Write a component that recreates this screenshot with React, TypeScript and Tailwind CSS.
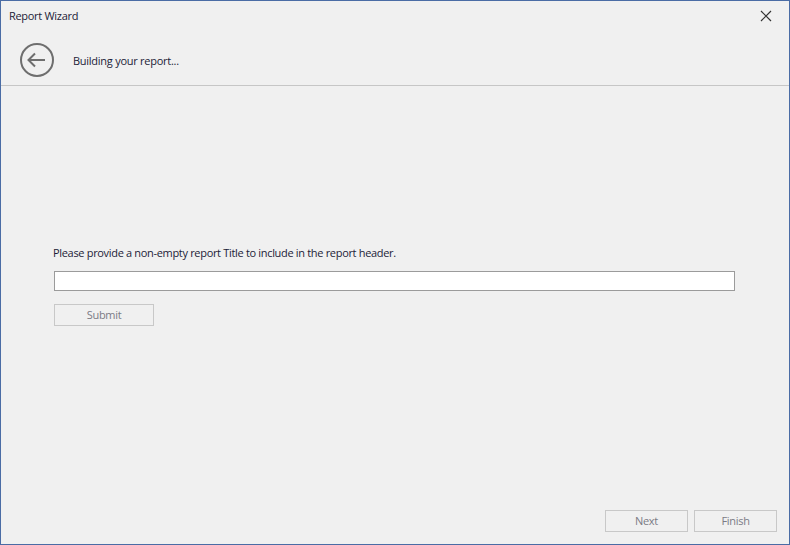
const font = "font-['Open_Sans','Noto_Sans',sans-serif]";

function BackIcon() {
  return (
    <svg width="36" height="36" viewBox="0 0 36 36" fill="none" stroke="#6e6e6e">
      <circle cx="18" cy="18" r="16" strokeWidth="2" />
      <path d="M26 18H9.5M16 11.5L9.5 18L16 24.5" strokeWidth="2" />
    </svg>
  );
}

function CloseIcon() {
  return (
    <svg width="12" height="12" viewBox="0 0 12 12" fill="none" stroke="#333333" strokeWidth="1.2">
      <path d="M1 1L11 11M11 1L1 11" />
    </svg>
  );
}

function DisabledButton({ label, width }: { label: string; width: string }) {
  return (
    <button
      type="button"
      disabled
      className={`h-[22px] ${width} border border-[#c8c8c8] bg-[#f0f0f0] text-[11px] leading-[20px] tracking-[-0.3px] text-[#7b7b85]`}
    >
      {label}
    </button>
  );
}

export default function App() {
  return (
    <div className={`flex h-[545px] w-[790px] flex-col border border-[#4a6ca5] bg-[#f0f0f0] ${font} text-[#1c1c38]`}>
      <div className="flex h-[30px] items-center justify-between pl-2 pr-[17px]">
        <span className="text-[11px] tracking-[-0.3px]">Report Wizard</span>
        <CloseIcon />
      </div>

      <div className="box-content flex h-[50px] items-center gap-[18px] border-b border-[#c6c6c6] pl-[18px] pt-1">
        <BackIcon />
        <span className="pt-[2px] text-[11px] tracking-[-0.26px]">Building your report...</span>
      </div>

      <div className="flex flex-1 flex-col justify-between">
        <div className="flex flex-col pl-[52px] pr-[54px] pt-[159px]">
          <p className="text-[11px] leading-[16px] tracking-[-0.32px]">
            Please provide a non-empty report Title to include in the report header.
          </p>
          <input type="text" className="ml-[1px] mt-[10px] h-[20px] w-[681px] border border-[#9b9b9b] bg-white" />
          <div className="ml-[1px] mt-[10px]">
            <DisabledButton label="Submit" width="w-[100px]" />
          </div>
        </div>

        <div className="flex justify-end gap-[6px] pb-[12px] pr-[12px]">
          <DisabledButton label="Next" width="w-[83px]" />
          <DisabledButton label="Finish" width="w-[83px]" />
        </div>
      </div>
    </div>
  );
}
